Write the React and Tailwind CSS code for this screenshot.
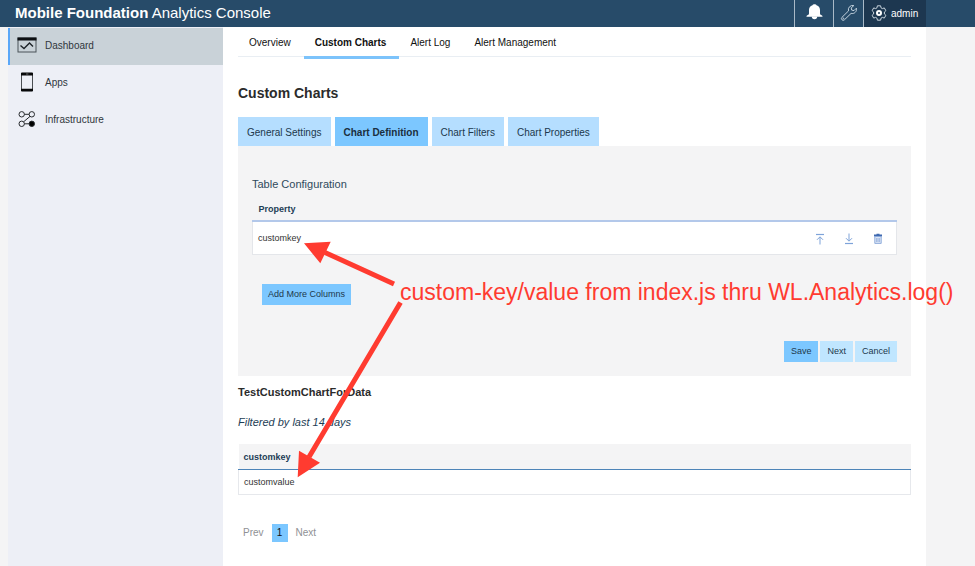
import React from "react";

const navItems = [
  { label: "Dashboard", icon: DashboardIcon, active: true },
  { label: "Apps", icon: PhoneIcon },
  { label: "Infrastructure", icon: NodesIcon },
];

const pageTabs = ["Overview", "Custom Charts", "Alert Log", "Alert Management"];
const chartTabs = ["General Settings", "Chart Definition", "Chart Filters", "Chart Properties"];

function DashboardIcon() {
  return (
    <svg width="20" height="16" viewBox="0 0 20 16" fill="none" aria-hidden="true">
      <rect x="1" y="1" width="18" height="14" stroke="#4a5359" strokeWidth="1" />
      <rect x="0.5" y="0.5" width="19" height="3" fill="#0c0f12" />
      <path d="M3.5 8.5 7 11.5 12.5 6 16 9.5" stroke="#1d2328" strokeWidth="1.4" />
    </svg>
  );
}

function PhoneIcon() {
  return (
    <svg width="20" height="20" viewBox="0 0 20 20" fill="none" aria-hidden="true">
      <rect x="4.5" y="1" width="11" height="18" rx="0.5" stroke="#4b4f53" strokeWidth="1" />
      <path d="M4 .8h12v2.600H4zM4 16.800h12v2.400H4z" fill="#08090a" />
      <path d="M9 2h2.400" stroke="#aaa" strokeWidth="0.600" />
    </svg>
  );
}

function NodesIcon() {
  return (
    <svg width="20" height="18" viewBox="0 0 20 18" fill="none" stroke="#26292c" aria-hidden="true">
      <circle cx="4.700" cy="4.300" r="2.700" />
      <circle cx="14.800" cy="4.300" r="2.700" />
      <circle cx="4.700" cy="13.800" r="2.700" />
      <circle cx="14.800" cy="13.800" r="2.700" fill="#000" />
      <path d="M7.400 4.300h4.700M13 6.400 6.600 11.800M7.400 13.800h4.700" />
    </svg>
  );
}

function BellIcon() {
  return (
    <svg width="17" height="16" viewBox="0 0 17 16" fill="#fff" aria-hidden="true">
      <path d="M8.500 0.300c1 0 1.700.4 2 .9 2.300.700 3.500 2.500 3.500 4.900v3.400c0 .9.700 1.500 2 2 .4.200.5.500.5 1.300H.5c0-.8.1-1.100.5-1.300 1.300-.5 2-1.100 2-2V6.100c0-2.400 1.200-4.200 3.500-4.900.3-.5 1-.9 2-.9Z" />
      <path d="M5.800 12.600h5.400a2.700 2.700 0 0 1-5.400 0Z" />
    </svg>
  );
}

function WrenchIcon() {
  return (
    <svg width="18" height="18" viewBox="0 0 18 18" fill="none" stroke="#c3d2de" strokeWidth="1" aria-hidden="true">
      <path d="M13.800 1.600a4.300 4.300 0 0 0-5.300 5.300L2 13.300a1.700 1.700 0 0 0 2.400 2.500l6.700-6.400a4.300 4.300 0 0 0 5.300-5.200L14 6.600l-2.300-.5-.5-2.200z" />
      <circle cx="3.500" cy="14.400" r="0.400" />
    </svg>
  );
}

function GearIcon() {
  return (
    <svg width="16" height="16" viewBox="0 0 16 16" fill="none" stroke="#c9d4dd" strokeWidth="1" strokeLinejoin="round" aria-hidden="true">
      <path d="M6.400.8h3.200l.4 2 1.400.8 1.900-.7 1.600 2.800-1.500 1.300v2l1.500 1.300-1.600 2.800-1.900-.7-1.400.8-.4 2H6.400l-.4-2-1.400-.8-1.900.7-1.600-2.800L2.600 9V7L1.100 5.700l1.600-2.800 1.900.7L6 2.800z" />
      <circle cx="8" cy="8" r="2" strokeWidth="2" stroke="#fff" />
    </svg>
  );
}

function MoveTopIcon() {
  return (
    <svg width="10" height="12" viewBox="0 0 10 12" fill="none" stroke="#7ea3d9" aria-hidden="true">
      <path d="M1 1.500h8" strokeWidth="1.200" />
      <path d="M5 11.500V4M2 6.800 5 3.800l3 3" />
    </svg>
  );
}

function MoveBottomIcon() {
  return (
    <svg width="10" height="12" viewBox="0 0 10 12" fill="none" stroke="#7ea3d9" aria-hidden="true">
      <path d="M1 10.500h8" strokeWidth="1.200" />
      <path d="M5 .5V8M2 5.200l3 3 3-3" />
    </svg>
  );
}

function TrashIcon() {
  return (
    <svg width="10" height="12" viewBox="0 0 10 12" fill="none" aria-hidden="true">
      <path d="M1 1.500h2.500V.7h3v.8H9v2H1z" fill="#3f69b0" />
      <path d="M1.800 3.500h6.400v6.900H1.800z" fill="#dbe5f5" stroke="#86a5d8" strokeWidth="0.900" />
      <path d="M3.600 5v4M5 5v4M6.400 5v4" stroke="#86a5d8" strokeWidth="0.700" />
    </svg>
  );
}

function Header() {
  return (
    <header className="flex h-[27px] bg-[#274b69] pr-[49px] pl-[15px] text-white">
      <h1 className="flex-1 text-[15px] leading-[26px] whitespace-nowrap">
        <strong className="font-bold">Mobile Foundation</strong> Analytics Console
      </h1>
      <button aria-label="Notifications" className="flex w-[39px] justify-center border-l border-[#a9b9c7] pt-1">
        <BellIcon />
      </button>
      <button aria-label="Tools" className="flex w-[30px] justify-center border-l border-[#a9b9c7] pt-1">
        <WrenchIcon />
      </button>
      <button className="flex w-[63px] items-center gap-1 border-l border-[#a9b9c7] bg-[#1d3750] pb-px pl-[7px] text-[10px]">
        <GearIcon />
        admin
      </button>
    </header>
  );
}

function Sidebar() {
  return (
    <nav aria-label="Main" className="w-[215px] shrink-0 bg-[#edeff6] pt-px">
      {navItems.map(({ label, icon: Icon, active }) => (
        <a
          key={label}
          href="#"
          className={`flex h-[37px] items-center gap-2 border-l-2 pb-1 pl-[7px] text-[10px] text-[#30373d] ${
            active ? "border-[#5aa7f8] bg-[#c9d2d8]" : "border-transparent"
          }`}
        >
          <Icon />
          <span className="pt-0.5">{label}</span>
        </a>
      ))}
    </nav>
  );
}

function Definition() {
  return (
    <section className="bg-[#f4f4f5] px-[14px] pt-[30px] pb-[14px]">
      <h3 className="text-[11px] leading-4 text-[#2f4a5c]">Table Configuration</h3>
      <table className="mt-[10px] w-full border-collapse text-left text-[9px]">
        <thead>
          <tr className="h-[19px] border-b-2 border-[#b3c8ea] text-[#1d3d55]">
            <th className="pb-0.5 pl-[6px] font-bold">Property</th>
            <th className="w-[97px]" aria-label="Actions" />
          </tr>
        </thead>
        <tbody>
          <tr className="h-[33px] border-x border-b border-[#e4e6ea] bg-white text-[#333]">
            <td className="pt-0.5 pl-[5px]">customkey</td>
            <td className="pt-0.5">
              <div className="flex items-center justify-end gap-[19px] pr-[13px]">
                <button aria-label="Move to top"><MoveTopIcon /></button>
                <button aria-label="Move to bottom"><MoveBottomIcon /></button>
                <button aria-label="Delete"><TrashIcon /></button>
              </div>
            </td>
          </tr>
        </tbody>
      </table>
      <button className="mt-[29px] ml-[10px] h-[21px] bg-[#7cc7ff] px-[6px] pt-0.5 text-[9px] text-[#20384c]">
        Add More Columns
      </button>
      <div className="mt-9 flex justify-end gap-[2px] text-[9px] text-[#20384c]">
        <button className="h-[21px] bg-[#7cc7ff] px-[7px] pt-0.5">Save</button>
        <button className="h-[21px] bg-[#c0e6ff] px-[7px] pt-0.5">Next</button>
        <button className="h-[21px] bg-[#c0e6ff] px-[7px] pt-0.5">Cancel</button>
      </div>
    </section>
  );
}

function Annotation() {
  return (
    <div className="pointer-events-none absolute top-0 left-0 text-[#ff3b30]">
      <svg width="420" height="490" viewBox="0 0 420 490" fill="currentColor" aria-hidden="true">
        <path d="M394 284 325 252.500M400.500 302.500 309 457" stroke="currentColor" strokeWidth="5" />
        <path d="M304 243.300 330.700 241.700 320.300 263.300zM297.700 477.300 299 450.700 320 462.700z" />
      </svg>
      <p className="absolute top-[278px] left-[400px] text-[23px] leading-7 whitespace-nowrap">
        custom-key/value from index.js thru WL.Analytics.log()
      </p>
    </div>
  );
}

export default function App() {
  return (
    <div className="relative flex min-h-screen flex-col overflow-hidden bg-[#f4f4f5] font-['Liberation_Sans',Arial,sans-serif]">
      <Header />
      <div className="mr-[49px] ml-2 flex flex-1">
        <Sidebar />
        <main className="min-w-0 flex-1 bg-white px-[15px]">
          <nav aria-label="Views" className="flex h-[30px] border-b border-[#e9eef3] text-[10px] text-[#111]">
            {pageTabs.map((tab) => (
              <a
                key={tab}
                href="#"
                className={`h-8 border-b-[3px] pr-[13px] pl-[11px] leading-8 ${
                  tab === "Custom Charts" ? "border-[#7cc3fb] font-bold" : "border-transparent"
                }`}
              >
                {tab}
              </a>
            ))}
          </nav>
          <h2 className="mt-[26px] text-[14px] leading-5 font-bold text-[#2b2b2b]">Custom Charts</h2>
          <div className="mt-[14px] flex gap-1 text-[10px] text-[#20384c]">
            {chartTabs.map((tab) => (
              <button
                key={tab}
                className={`h-[29px] px-[9px] pt-px ${
                  tab === "Chart Definition" ? "bg-[#7cc7ff] font-bold text-[#1b2f40]" : "bg-[#b5deff]"
                }`}
              >
                {tab}
              </button>
            ))}
          </div>
          <Definition />
          <h3 className="mt-2 text-[11px] leading-4 font-bold text-[#2b2b2b]">TestCustomChartForData</h3>
          <p className="mt-[14px] text-[11px] leading-4 text-[#1d3d55] italic">Filtered by last 14 days</p>
          <table className="mt-[14px] w-full border-collapse text-left text-[9px]">
            <thead>
              <tr className="h-[26px] border-b border-[#4d84b8] bg-[#f4f4f5] text-[#1d3d55]">
                <th className="pt-[3px] pl-[5px] font-bold">customkey</th>
              </tr>
            </thead>
            <tbody>
              <tr className="h-[25px] border-x border-b border-[#e6e8ec] text-[#333]">
                <td className="pt-0.5 pl-[5px]">customvalue</td>
              </tr>
            </tbody>
          </table>
          <nav aria-label="Pagination" className="mt-[29px] flex gap-2 pl-[5px] text-[10px] leading-[18px] text-[#8f9194]">
            <button>Prev</button>
            <button aria-current="page" className="w-4 bg-[#7cc7ff] text-[#111]">1</button>
            <button>Next</button>
          </nav>
        </main>
      </div>
      <Annotation />
    </div>
  );
}
